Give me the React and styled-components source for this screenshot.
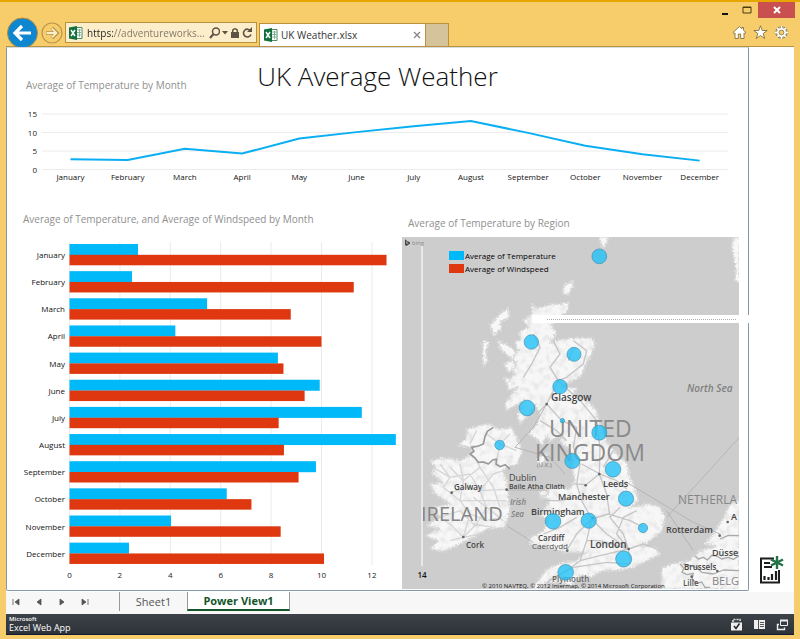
import React from "react";
import styled, { createGlobalStyle, css } from "styled-components";

const GlobalStyle = createGlobalStyle`
  *, *::before, *::after { box-sizing: border-box; }
  html, body { margin: 0; padding: 0; }
  body { background: #f7cd6c; font-family: "Open Sans", "Noto Sans", sans-serif; color: #333; }
  button, input { font-family: inherit; margin: 0; padding: 0; border: 0; background: none; color: inherit; }
  svg { display: block; }
  svg text { font-family: "Open Sans", "Noto Sans", sans-serif; }
`;

const Window = styled.div`
  min-height: 100vh;
  display: flex;
  flex-direction: column;
  padding: 0 6px 4px;
  background: #f7cd6c;
  border-top: 2px solid #e6a500;
`;

const TitleBar = styled.header`
  height: 17px;
  display: flex;
  justify-content: flex-end;
  margin-right: -1px;
`;

const CaptionButton = styled.button`
  width: ${(p) => (p.$close ? 37 : 22)}px;
  height: 16px;
  display: flex;
  align-items: center;
  justify-content: center;
  background: ${(p) => (p.$close ? "#c9504f" : "transparent")};
`;

const NavBar = styled.div`
  height: 28px;
  display: flex;
  align-items: center;
  border-bottom: 1px solid #b8923c;
`;

const RoundButton = styled.button`
  flex: none;
  display: block;
  ${(p) =>
    p.$main
      ? css`
          width: 33px;
          height: 31px;
          margin-top: -1px;
        `
      : css`
          width: 26px;
          height: 28px;
        `}
`;

const AddressBar = styled.div`
  flex: none;
  width: 192px;
  height: 21px;
  display: flex;
  align-items: center;
  gap: 2px;
  padding: 0 3px;
  background: #fdeecb;
  border: 1px solid #b8923c;
`;

const AddressInput = styled.input`
  flex: 1;
  min-width: 0;
  height: 19px;
  padding-left: 2px;
  font-size: 10px;
  outline: 0;
  color: transparent;
  background: linear-gradient(90deg, #222 28px, #7d7565 28px);
  background-clip: text;
`;

const GlyphButton = styled.button`
  flex: none;
  display: flex;
  align-items: center;
`;

const BrowserTab = styled.div`
  align-self: flex-end;
  flex: none;
  width: 167px;
  height: 23px;
  margin-left: 2px;
  padding: 0 4px;
  display: flex;
  align-items: center;
  gap: 3px;
  background: #fff;
  border: 1px solid #b8923c;
  border-bottom: 0;
`;

const TabTitle = styled.span`
  flex: 1;
  font-size: 10px;
  white-space: nowrap;
`;

const NewTab = styled.button`
  align-self: flex-end;
  flex: none;
  width: 23px;
  height: 23px;
  background: #d4c39b;
  border: 1px solid #b8923c;
  border-left: 0;
  border-bottom: 0;
`;

const Tools = styled.div`
  margin-left: auto;
  padding-right: 5px;
  display: flex;
  gap: 6px;
`;

const Client = styled.div`
  flex: 1;
  display: flex;
  flex-direction: column;
  background: #fff;
`;

const Workspace = styled.main`
  flex: 1;
  display: flex;
`;

const Report = styled.section`
  flex: 1;
  min-width: 0;
  border: 1px solid #8497ad;
  border-top-color: #d8dbe2;
  border-radius: 0 0 2px 2px;
`;

const ReportHeader = styled.div`
  height: 55px;
  display: grid;
  grid-template-columns: 1fr auto 1fr;
`;

const Caption = styled.h2`
  margin: 0;
  font-size: 10px;
  line-height: 20px;
  font-weight: 400;
  color: #8f8f8f;
  white-space: nowrap;
`;

const HeaderCaption = styled(Caption)`
  padding: 27px 0 0 19px;
`;

const ReportTitle = styled.h1`
  margin: 0;
  font-size: 26px;
  line-height: 56px;
  font-weight: 300;
  color: #111;
`;

const Chart = styled.svg`
  width: 100%;
  height: auto;
`;

const LowerRow = styled.div`
  display: grid;
  grid-template-columns: 395fr 346fr;
`;

const BarPanel = styled.div`
  padding-top: 19px;
  ${Caption} { padding-left: 16px; margin-bottom: 8px; }
`;

const MapPanel = styled.div`
  padding: 23px 9px 1px 0;
  ${Caption} { padding-left: 6px; margin-bottom: 4px; }
`;

const MapFrame = styled.div`
  position: relative;
`;

const Legend = styled.ul`
  position: absolute;
  left: 47px;
  top: 12px;
  margin: 0;
  padding: 0;
  list-style: none;
  font-size: 8px;
  line-height: 13px;
  font-weight: 500;
  color: #000;
`;

const LegendItem = styled.li`
  display: flex;
  align-items: center;
  gap: 1px;
  &::before {
    content: "";
    width: 15px;
    height: 9px;
    background: ${(p) => p.$color};
  }
`;

const Divider = styled.div`
  position: absolute;
  left: 130px;
  right: -10px;
  top: 78px;
  height: 8px;
  padding: 4px 13px 0 15px;
  background: #fff;
  &::before {
    content: "";
    display: block;
    border-top: 1px dotted #aaa;
  }
`;

const SideColumn = styled.aside`
  flex: none;
  width: 45px;
  display: flex;
  align-items: flex-end;
  justify-content: center;
  padding-bottom: 7px;
`;

const SheetBar = styled.nav`
  height: 23px;
  display: flex;
  align-items: flex-start;
  background: #f7f7f7;
  border-top: 1px solid #fff;
`;

const SheetArrows = styled.div`
  width: 114px;
  height: 19px;
  padding-left: 5px;
  display: flex;
  align-items: center;
  gap: 11px;
  border-right: 1px solid #999;
`;

const SheetTab = styled.button`
  height: 19px;
  font-size: 11px;
  line-height: 18px;
  width: ${(p) => (p.$active ? 103 : 67)}px;
  color: #555;
  ${(p) =>
    p.$active &&
    css`
      color: #14562c;
      font-weight: 700;
      background: #fff;
      border: 1px solid #999;
      border-top: 0;
      border-bottom: 2px solid #14562c;
    `}
`;

const StatusBar = styled.footer`
  height: 21px;
  display: flex;
  align-items: center;
  justify-content: space-between;
  padding: 0 5px 0 3px;
  background: linear-gradient(#3c4248, #2e3339);
  border-bottom: 1px solid #14192e;
  color: #fff;
`;

const Brand = styled.div`
  font-size: 9px;
  line-height: 10px;
  font-weight: 500;
  small { display: block; font-size: 6px; line-height: 8px; font-weight: 600; }
`;

const StatusTools = styled.div`
  display: flex;
  gap: 10px;
`;

const BLUE = "#00b9f9";
const RED = "#df3811";
const MONTHS = ["January", "February", "March", "April", "May", "June", "July", "August", "September", "October", "November", "December"];
const TEMPERATURE = [2.72, 2.48, 5.46, 4.2, 8.27, 9.93, 11.6, 12.95, 9.78, 6.24, 4.03, 2.36];
const WINDSPEED = [12.58, 11.28, 8.78, 10, 8.49, 9.33, 8.3, 8.51, 9.09, 7.22, 8.38, 10.1];

const ExcelIcon = () => (
  <svg width="14" height="14" viewBox="0 0 14 14">
    <path d="M7 1.500h6v11H7" fill="#fff" stroke="#4d8b62" />
    <path d="M8 4h4M8 6.500h4M8 9h4M10.500 3v8" stroke="#6ba37c" strokeWidth=".8" />
    <path d="M0 1.500 8 0v14L0 12.500z" fill="#11703b" />
    <path d="m2 4 4 6M6 4l-4 6" stroke="#fff" strokeWidth="1.500" />
  </svg>
);

const HomeIcon = () => (
  <svg width="15" height="15" viewBox="0 0 15 15">
    <path d="M7.500 1.500 1 7.500l1.200 1L3 7.900V13.500h3.300V9h2.400v4.500H12V7.900l.8.600L14 7.500l-2.500-2.300V2.500H10v1.300z" fill="#fff" stroke="#83703f" strokeWidth=".9" />
  </svg>
);

const StarIcon = () => (
  <svg width="15" height="15" viewBox="0 0 15 15">
    <path d="m7.500.8 1.700 4.700h5L10.200 8.500l1.500 5-4.200-3-4.200 3 1.500-5L.8 5.500h5z" fill="#fff" stroke="#83703f" strokeWidth=".9" />
  </svg>
);

const GEAR_TEETH = "M7.500 .9V14.100M.9 7.500H14.100M2.900 2.900 12.100 12.100M12.100 2.900 2.900 12.100";

const GearIcon = () => (
  <svg width="15" height="15" viewBox="0 0 15 15">
    <path d={GEAR_TEETH} stroke="#83703f" strokeWidth="3.400" />
    <circle cx="7.500" cy="7.500" r="5.300" fill="#83703f" />
    <path d={GEAR_TEETH} stroke="#fff" strokeWidth="1.800" />
    <circle cx="7.500" cy="7.500" r="4.500" fill="#fff" />
    <circle cx="7.500" cy="7.500" r="2.400" fill="#f7cd6c" stroke="#83703f" strokeWidth=".8" />
  </svg>
);

function LineChart() {
  const x = (i) => 63.5 + i * 57.2;
  const y = (v) => 66.5 - v * 3.7;
  const values = [2.8, 2.6, 5.6, 4.3, 8.4, 10.1, 11.7, 13.1, 9.9, 6.4, 4.1, 2.4];
  return (
    <Chart viewBox="0 0 741 87" role="img" aria-label="Average of Temperature by Month">
      {[0, 5, 10, 15].map((v) => (
        <g key={v}>
          <path d={`M35 ${y(v)}H721`} stroke="#ececec" />
          <text x="30" y={y(v) + 3} fontSize="8" fill="#222" textAnchor="end">{v}</text>
        </g>
      ))}
      <polyline points={values.map((v, i) => `${x(i)},${y(v)}`).join(" ")} fill="none" stroke="#0aaef2" strokeWidth="2" />
      {MONTHS.map((m, i) => (
        <text key={m} x={x(i)} y="77" fontSize="8" fill="#111" textAnchor="middle">{m}</text>
      ))}
    </Chart>
  );
}

function BarChart() {
  const unit = 25.2;
  return (
    <Chart viewBox="0 0 395 350" role="img" aria-label="Temperature and windspeed by month">
      {[0, 2, 4, 6, 8, 10, 12].map((v) => (
        <g key={v}>
          <path d={`M${62.5 + v * unit} 5V328`} stroke="#ebebeb" />
          <text x={62.5 + v * unit} y="341" fontSize="8" fill="#222" textAnchor="middle">{v}</text>
        </g>
      ))}
      {MONTHS.map((m, i) => {
        const top = 7 + i * 27.15;
        return (
          <g key={m}>
            <text x="58" y={top + 14} fontSize="8" fill="#111" textAnchor="end">{m}</text>
            <rect x="62.500" y={top} width={TEMPERATURE[i] * unit} height="11" fill={BLUE} />
            <rect x="62.500" y={top + 10.8} width={WINDSPEED[i] * unit} height="10.500" fill={RED} />
          </g>
        );
      })}
    </Chart>
  );
}

const BRITAIN =
  "M395 212 415 222 450 212 508 206 502 230 480 250 455 275 470 298 452 325 480 318 520 312 578 312 585 330 575 360 555 395 545 425 520 440 480 458 532 462 520 482 560 500 590 530 600 575 620 620 640 650 682 690 690 730 705 760 715 800 690 822 720 815 740 808 778 818 796 850 785 890 750 920 720 935 765 940 780 962 740 980 705 1000 650 1010 600 1012 575 1030 540 1025 515 1055 480 1045 440 1045 415 1066H395L415 1040 440 1005 490 985 530 980 555 955 500 955 460 945 430 938 390 930 385 915 430 890 445 855 420 845 440 815 450 795 420 790 430 770 470 760 510 765 525 740 515 700 525 670 500 640 480 622 490 600 450 622 440 605 425 632 405 610 385 600 410 570 420 540 405 510 385 545 360 570 352 545 370 500 345 515 320 530 315 510 335 480 355 460 325 468 320 440 345 420 330 400 350 385 330 365 355 350 345 325 365 315 355 295 385 280 370 260 395 240z";
const IRELAND =
  "M265 570 300 585 335 580 350 610 368 650 352 690 325 698 308 710 320 740 325 790 330 830 315 880 260 885 220 910 170 935 130 952 90 945 115 920 75 905 120 885 80 875 120 850 100 820 150 810 100 775 90 750 130 745 95 720 105 700 90 680 130 670 180 680 205 665 220 640 175 635 200 610 200 585 235 575z";
const ISLES =
  "M325 222 328 250 300 265 305 285 280 305 270 272 300 240zM250 320 268 322 258 350 262 380 250 400 248 355zM292 318 325 335 348 352 338 378 300 345zM312 390 338 380 350 400 325 415zM495 150 520 142 518 160 505 182 492 180 488 165zM595 8H630L610 42zM312 430 335 435 320 450zM1000 10H1018V145L1004 140 1008 110 996 40zM412 672 445 655 435 680 415 692zM420 772 445 762 440 785 422 790z";
const CONTINENT = "M1018 795 988 815 965 860 935 905 912 930 950 938 900 950 870 980 835 985 785 1002V1066H1018z";
const ROADS =
  "M440 510 485 560 530 580 520 640 540 690 530 750 545 800 575 855 620 900 685 945M545 505 590 560 600 640 598 720 620 780 630 850 670 900 685 945M440 510 410 540M545 690 600 720 650 740 680 765M525 750 558 752 598 720M575 855 530 900 500 950M575 855 560 920 540 980 500 1010 440 1045M575 855 625 840 690 860 730 880M685 945 730 930 770 945M685 945 650 900 670 850 710 830M685 945 690 990M685 945 600 965 540 980M685 945 600 920 560 920M460 320 480 360 450 400 475 440 545 505M520 320 560 350 550 390 500 430 475 440 440 510M520 340 505 380M400 300 420 340 395 390 370 430M420 560 470 590 500 620M430 800 480 800 530 790M430 900 480 880 530 850M640 650 610 700M660 820 630 850M445 1040 520 1000 620 985 690 990";
const COUNTIES =
  "M120 690 150 730 210 720 240 770 320 766M155 775 200 760 240 770 260 820 310 860M190 910 230 870 260 820 220 790M190 910 150 870 120 850M240 770 280 720 310 710M180 690 190 740 180 800 210 840 190 910M130 760 180 800 240 800 320 800M150 920 190 910 240 900M300 630 330 600M300 630 350 650M300 630 260 600M300 630 290 680M150 700 190 740 240 700 230 680M240 700 280 760 300 820M210 840 260 860 300 850M100 700 150 730 130 760M230 590 210 630M120 850 180 830 220 870 280 880";
const DOTS = [
  [598, 67, 7.4], [394, 324, 7.2], [522, 361, 7], [480, 458, 7.2], [381, 522, 7.8], [487, 560, 2.2],
  [598, 596, 7.5], [299, 633, 4.8], [517, 681, 7.5], [639, 706, 7.8], [678, 794, 7.6], [459, 862, 7.8],
  [566, 860, 7.6], [729, 882, 4.6], [671, 975, 8], [497, 1015, 7.8],
];
const CITIES = [
  [440, 510], [155, 776], [320, 767], [190, 909], [598, 720], [557, 754], [578, 852], [686, 945],
  [983, 864], [959, 905], [952, 1011], [875, 1028], [502, 950],
];
const LABELS = [
  ["Glasgow", 149, 164, 10, "#444", 600],
  ["UNITED", 147, 200, 23, "#8a8a8a", 400],
  ["KINGDOM", 133, 224, 23, "#8a8a8a", 400],
  ["Dublin", 107, 244, 9, "#444", 500],
  ["Baile Atha Cliath", 107, 252, 7, "#444", 600],
  ["Galway", 52, 253, 8, "#444", 600],
  ["IRELAND", 19, 284, 20, "#858585", 400],
  ["Cork", 64, 311, 8, "#444", 600],
  ["Leeds", 201, 250, 9, "#444", 600],
  ["Manchester", 156, 263, 9, "#444", 600],
  ["Birmingham", 129, 278, 9, "#444", 600],
  ["Cardiff", 136, 304, 8, "#444", 600],
  ["Caerdydd", 130, 312, 8, "#555", 500],
  ["London", 188, 311, 10, "#444", 600],
  ["Plymouth", 150, 345, 8, "#666", 600],
  ["NETHERLA", 276, 267, 12, "#858585", 400],
  ["A", 329, 283, 9, "#444", 600],
  ["Rotterdam", 264, 296, 9, "#444", 600],
  ["Düsse", 310, 319, 9, "#444", 600],
  ["Brussels", 282, 333, 8, "#444", 600],
  ["Lille", 281, 349, 8, "#555", 600],
  ["BELG", 310, 348, 11, "#858585", 400],
];

function RegionMap() {
  return (
    <Chart viewBox="0 0 337 352" role="img" aria-label="Map of average temperature by region">
      <defs>
        <filter id="coast" x="-5%" y="-5%" width="110%" height="110%" colorInterpolationFilters="sRGB">
          <feTurbulence type="fractalNoise" baseFrequency=".16" numOctaves="3" seed="4" result="noise" />
          <feDisplacementMap in="SourceGraphic" in2="noise" scale="14" xChannelSelector="R" yChannelSelector="G" />
        </filter>
        <filter id="hills" x="0" y="0" width="100%" height="100%" colorInterpolationFilters="sRGB">
          <feTurbulence type="fractalNoise" baseFrequency=".05" numOctaves="2" seed="9" />
          <feColorMatrix values="0 0 0 0 .8  0 0 0 0 .8  0 0 0 0 .8  2 0 0 0 -.85" />
          <feComposite in2="SourceGraphic" operator="in" />
        </filter>
      </defs>
      <rect width="337" height="352" fill="#cdcdcd" />
      <svg width="337" height="352" viewBox="6 9 1011 1056">
        <g filter="url(#coast)">
          <g fill="#f7f7f7" stroke="#dadada" strokeWidth="5" strokeLinejoin="round">
            <path d={BRITAIN} />
            <path d={IRELAND} />
            <path d={ISLES} />
            <path d={CONTINENT} />
          </g>
        </g>
        <path d={BRITAIN + CONTINENT + IRELAND} fill="#000" filter="url(#hills)" opacity=".5" />
        <path d={COUNTIES} fill="none" stroke="#d6d6d6" strokeWidth="4" strokeLinejoin="round" />
        <path d={ROADS} fill="none" stroke="#c6c6c6" strokeWidth="4" strokeLinejoin="round" />
        <path d="M1018 610 800 850M680 745 880 865 960 900M345 640 400 580 440 510M320 875 400 925M345 640 450 670 495 720M325 768H440M800 830 880 950" fill="none" stroke="#b5b5b5" strokeWidth="3" />
        <path d="M280 580 262 592 255 608 250 630 235 636 215 640 222 652 210 660 225 672 235 685 250 684 265 690 278 678 290 675 288 690 300 698 315 692 330 705" fill="none" stroke="#999" strokeWidth="5" strokeLinejoin="round" />
        <path d="M885 965 895 975 910 970 922 978 935 964 950 966 965 975 985 970 1000 976 1018 965M840 990 852 1002 846 1015 862 1022 880 1018 876 1035 890 1048 905 1044 915 1060 930 1060M850 990 890 1000 905 1015 940 1020 970 1008 1018 1010M960 915 985 904 1018 905" fill="none" stroke="#aaa" strokeWidth="4" strokeLinejoin="round" />
        {CITIES.map(([x, y]) => (
          <circle key={`${x}-${y}`} cx={x} cy={y} r="4" fill="#666" />
        ))}
      </svg>
      {LABELS.map(([text, x, y, size, fill, weight]) => (
        <text key={text} x={x} y={y} fontSize={size} fill={fill} fontWeight={weight}>{text}</text>
      ))}
      <g fill="#808080" fontStyle="italic">
        <text x="285" y="155" fontSize="10" fontWeight="600">North Sea</text>
        <text x="108" y="268" fontSize="8" fontWeight="600">Irish</text>
        <text x="109" y="280" fontSize="8" fontWeight="600">Sea</text>
      </g>
      <text x="135" y="230" fontSize="6" fill="#777">(U.K.)</text>
      {DOTS.map(([x, y, r]) => (
        <circle key={`${x}-${y}`} cx={x / 3 - 2} cy={y / 3 - 3} r={r} fill="#22c1f7" fillOpacity=".8" stroke="#4393b0" strokeWidth=".7" />
      ))}
      <path d="M20 6V329" stroke="#e8e8e8" strokeWidth="2" />
      <text x="20" y="341" fontSize="8" fontWeight="600" fill="#111" textAnchor="middle">14</text>
      <path d="M3 2.500 4.500 3v4L6.500 6 5 5.200V4l3 1.300v1.200L4.500 9 3 8z" fill="#444" />
      <text x="10" y="8" fontSize="6" fill="#888">bing</text>
      <text x="80" y="351" fontSize="6" fill="#111">© 2010 NAVTEQ, © 2012 Intermap, © 2014 Microsoft Corporation</text>
    </Chart>
  );
}

const ARROWS = [
  ["First sheet", "M2 2v6M8 2 4 5l4 3z"],
  ["Previous sheet", "M7 2 3 5l4 3z"],
  ["Next sheet", "M3 2l4 3-4 3z"],
  ["Last sheet", "M2 2l4 3-4 3zM8 2v6"],
];

export default function App() {
  return (
    <>
      <GlobalStyle />
      <Window>
        <TitleBar>
          <CaptionButton aria-label="Minimize">
            <svg width="8" height="10"><path d="M1 9h6" stroke="#111" strokeWidth="2" /></svg>
          </CaptionButton>
          <CaptionButton aria-label="Maximize">
            <svg width="10" height="8"><path d="M1 1h8v6H1zM1 1.500h8" fill="none" stroke="#4a3a12" /></svg>
          </CaptionButton>
          <CaptionButton $close aria-label="Close">
            <svg width="8" height="8"><path d="m1 1 6 6M7 1 1 7" stroke="#fff" strokeWidth="2" /></svg>
          </CaptionButton>
        </TitleBar>
        <NavBar>
          <RoundButton $main aria-label="Back">
            <svg width="33" height="31" viewBox="0 0 33 31">
              <circle cx="16.500" cy="16" r="15" fill="#0e86d0" stroke="#b08c3c" />
              <path d="M25 16H9M16 9l-7 7 7 7" fill="none" stroke="#fff" strokeWidth="3.200" />
            </svg>
          </RoundButton>
          <RoundButton aria-label="Forward">
            <svg width="26" height="28" viewBox="0 0 26 28">
              <circle cx="13" cy="14" r="10" fill="#f7cd6c" stroke="#b8964a" strokeWidth="1.200" />
              <path d="M7 14h10M13 9l5 5-5 5" fill="none" stroke="#b8964a" strokeWidth="3.600" />
              <path d="M7.500 14h9.500M13 9.600l4.400 4.400-4.400 4.400" fill="none" stroke="#fdeecb" strokeWidth="1.800" />
            </svg>
          </RoundButton>
          <AddressBar>
            <ExcelIcon />
            <AddressInput aria-label="Address" defaultValue="https://adventureworks..." />
            <GlyphButton aria-label="Search">
              <svg width="11" height="12"><circle cx="7" cy="4.500" r="3.500" fill="none" stroke="#5c5344" strokeWidth="1.500" /><path d="M4.500 7 1 11" stroke="#5c5344" strokeWidth="2" /></svg>
            </GlyphButton>
            <GlyphButton aria-label="Address history">
              <svg width="6" height="4"><path d="M0 0h6L3 3.500z" fill="#5c5344" /></svg>
            </GlyphButton>
            <GlyphButton aria-label="Site security">
              <svg width="10" height="12" viewBox="1 0 10 12"><path d="M2 5h8v6H2z" fill="#5c5344" /><path d="M3.700 5V3.300Q6 0 8.300 3.300V5" fill="none" stroke="#5c5344" strokeWidth="1.500" /></svg>
            </GlyphButton>
            <GlyphButton aria-label="Refresh">
              <svg width="11" height="12"><path d="M8.700 4A3.900 3.900 0 1 0 9 7.500" fill="none" stroke="#5c5344" strokeWidth="1.600" /><path d="M10 0v5H5z" fill="#5c5344" /></svg>
            </GlyphButton>
          </AddressBar>
          <BrowserTab>
            <ExcelIcon />
            <TabTitle>UK Weather.xlsx</TabTitle>
            <GlyphButton aria-label="Close tab">
              <svg width="8" height="8"><path d="m1 1 6 6M7 1 1 7" stroke="#888" strokeWidth="1.400" /></svg>
            </GlyphButton>
          </BrowserTab>
          <NewTab aria-label="New tab" />
          <Tools>
            <GlyphButton aria-label="Home"><HomeIcon /></GlyphButton>
            <GlyphButton aria-label="Favorites"><StarIcon /></GlyphButton>
            <GlyphButton aria-label="Tools"><GearIcon /></GlyphButton>
          </Tools>
        </NavBar>
        <Client>
          <Workspace>
            <Report>
              <ReportHeader>
                <HeaderCaption>Average of Temperature by Month</HeaderCaption>
                <ReportTitle>UK Average Weather</ReportTitle>
              </ReportHeader>
              <LineChart />
              <LowerRow>
                <BarPanel>
                  <Caption>Average of Temperature, and Average of Windspeed by Month</Caption>
                  <BarChart />
                </BarPanel>
                <MapPanel>
                  <Caption>Average of Temperature by Region</Caption>
                  <MapFrame>
                    <RegionMap />
                    <Legend>
                      <LegendItem $color={BLUE}>Average of Temperature</LegendItem>
                      <LegendItem $color={RED}>Average of Windspeed</LegendItem>
                    </Legend>
                    <Divider />
                  </MapFrame>
                </MapPanel>
              </LowerRow>
            </Report>
            <SideColumn>
              <GlyphButton aria-label="Report options">
                <svg width="26" height="29" viewBox="0 0 26 29">
                  <path d="M15 3.500H2v24h18V15" fill="none" stroke="#1d1d1d" strokeWidth="2" />
                  <path d="M5 8h6M5 12h8M5.500 25v-4M9.500 25v-3M13 25v-6M17 25v-9" stroke="#1d1d1d" strokeWidth="2.200" />
                  <path d="M18 1v13M12 4.500l12 6M12 10.500l12-6" stroke="#217346" strokeWidth="2.400" />
                </svg>
              </GlyphButton>
            </SideColumn>
          </Workspace>
          <SheetBar aria-label="Sheets">
            <SheetArrows>
              {ARROWS.map(([label, d]) => (
                <GlyphButton key={label} aria-label={label}>
                  <svg width="12" height="10"><path d={d} fill="#555" stroke="#555" strokeWidth=".8" /></svg>
                </GlyphButton>
              ))}
            </SheetArrows>
            <SheetTab>Sheet1</SheetTab>
            <SheetTab $active>Power View1</SheetTab>
          </SheetBar>
          <StatusBar>
            <Brand><small>Microsoft</small>Excel Web App</Brand>
            <StatusTools>
              <GlyphButton aria-label="Save">
                <svg width="13" height="13"><path d="M1 4.500h11V12.500H1z" fill="#eee" /><path d="M3 4V1.500h7V4" fill="none" stroke="#ddd" strokeDasharray="2 1" strokeWidth="1.600" /><path d="m4 8 2 2.500L9.500 5.500" fill="none" stroke="#222" strokeWidth="1.500" /></svg>
              </GlyphButton>
              <GlyphButton aria-label="Reading pane">
                <svg width="13" height="13"><path d="M1 2h11v9H1z" fill="#eee" /><path d="M5.500 2v9M7 4.500h4M7 6.500h4M7 8.500h4" stroke="#555" /></svg>
              </GlyphButton>
              <GlyphButton aria-label="Pop out">
                <svg width="13" height="13"><path d="M4.500 2.500h7v5h-7z" fill="none" stroke="#eee" /><path d="M4 2.500h8" stroke="#eee" strokeWidth="2" /><path d="M3 6.500H1.500v5h7V9.500" fill="none" stroke="#eee" strokeWidth="1.400" /></svg>
              </GlyphButton>
            </StatusTools>
          </StatusBar>
        </Client>
      </Window>
    </>
  );
}
